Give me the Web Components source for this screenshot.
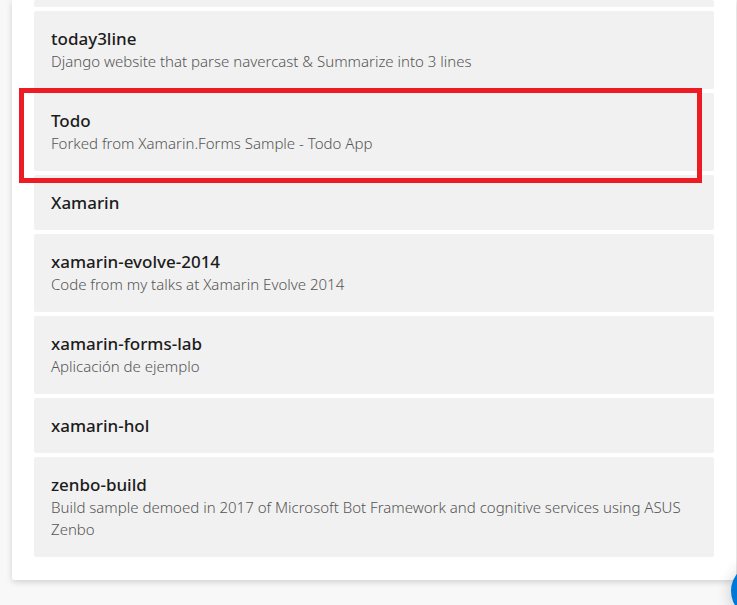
<!DOCTYPE html>
<html lang="en"><head><meta charset="utf-8"><title>Repositories</title>
<style>
html,body{margin:0;height:100%}
body{background:#f8f8f8;font-family:"Noto Sans","Open Sans",sans-serif;overflow:hidden}
</style></head><body>
<repo-page>
<repo-item class="clipped"></repo-item>
<repo-item name="today3line">Django website that parse navercast &amp; Summarize into 3 lines</repo-item>
<repo-item name="Todo" selected>Forked from Xamarin.Forms Sample - Todo App</repo-item>
<repo-item name="Xamarin"></repo-item>
<repo-item name="xamarin-evolve-2014">Code from my talks at Xamarin Evolve 2014</repo-item>
<repo-item name="xamarin-forms-lab">Aplicación de ejemplo</repo-item>
<repo-item name="xamarin-hol"></repo-item>
<repo-item name="zenbo-build">Build sample demoed in 2017 of Microsoft Bot Framework and cognitive services using ASUS Zenbo</repo-item>
</repo-page>
<chat-bubble></chat-bubble>
<script>
class RepoPage extends HTMLElement{constructor(){super();this.attachShadow({mode:"open"}).innerHTML=`
<style>:host{display:block;padding:0 1px 25px 12px}
main{background:#fff;padding:0 22px 23px;border-radius:0 0 2px 2px;box-shadow:0 2px 6px rgba(0,0,0,.16);display:flex;flex-direction:column;gap:4px}
::slotted(.clipped){height:7px}</style><main><slot></slot></main>`}}
class RepoItem extends HTMLElement{connectedCallback(){const n=this.getAttribute("name");const d=this.textContent.trim();
this.attachShadow({mode:"open"}).innerHTML=`
<style>:host{display:block;position:relative;background:#f1f1f1;border-radius:2px}
article{padding:17px 16px 16px 17px}h2{margin:0;font-size:17px;font-weight:500;line-height:22px;color:#1c1c1c}
p{margin:0;padding-bottom:1px;font-size:15px;font-weight:300;line-height:22px;color:#555}
:host([selected])::after{content:"";position:absolute;inset:-5px 12px -12px -15px;border:5px solid #ed1c24}
:host([selected]){z-index:1}</style>${n?`<article><h2></h2>${d?"<p><slot></slot></p>":""}</article>`:""}`;
if(n)this.shadowRoot.querySelector("h2").textContent=n}}
class ChatBubble extends HTMLElement{constructor(){super();this.attachShadow({mode:"open"}).innerHTML=`
<style>:host{position:fixed;right:-50px;bottom:-14px}button{display:block;width:56px;height:56px;border:0;border-radius:50%;background:#0078d7;box-shadow:0 2px 16px rgba(0,0,0,.2)}</style><button aria-label="Open chat"></button>`}}
customElements.define("repo-page",RepoPage);customElements.define("repo-item",RepoItem);customElements.define("chat-bubble",ChatBubble);
</script></body></html>
